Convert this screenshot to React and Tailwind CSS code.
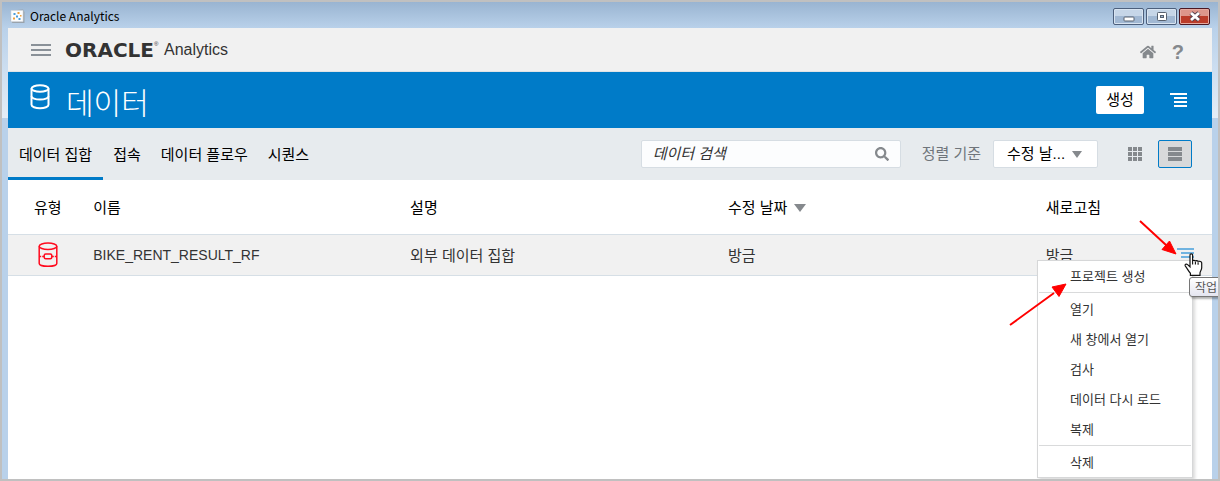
import { FaHome, FaSearch } from 'react-icons/fa';

const tabs = ['데이터 집합', '접속', '데이터 플로우', '시퀀스'];

const rows = [
  { name: 'BIKE_RENT_RESULT_RF', description: '외부 데이터 집합', modified: '방금', refreshed: '방금' },
];

const menuGroups = [
  ['프로젝트 생성'],
  ['열기', '새 창에서 열기', '검사', '데이터 다시 로드', '복제'],
  ['삭제'],
];

function AppIcon() {
  return (
    <svg className="w-[15px] h-[15px]" viewBox="0 0 15 15">
      <path d="M1 1.5 13 0.5 14.5 3v11H2.5L0.5 12z" fill="#9aa3ab" />
      <path d="M1 1.5h12v11H1z" fill="#fdfdfd" stroke="#d5dae0" strokeWidth="0.6" />
      <path d="M7.5 3h2v2h-2zM10 6h1.5v1.5H10zM3 8.5h2v2H3z" fill="#f0a03c" />
      <path d="M3.5 4h2v2h-2zM6 6.5h2v2H6zM8.5 9h2v2h-2z" fill="#4b9bd8" />
    </svg>
  );
}

function DatabaseIcon() {
  return (
    <svg className="w-5 h-[26px]" viewBox="0 0 20 26" fill="none" stroke="#fff" strokeWidth="2">
      <ellipse cx="10" cy="4.5" rx="8.5" ry="3.2" />
      <path d="M1.5 4.5v16.3c0 1.9 3.8 3.4 8.5 3.4s8.5-1.5 8.5-3.4V4.5" />
      <path d="M1.5 12.2c0 1.9 3.8 3.4 8.5 3.4s8.5-1.5 8.5-3.4" />
    </svg>
  );
}

function DatasetIcon() {
  return (
    <svg className="w-5 h-[26px]" viewBox="0 0 20 26" fill="none" stroke="#ff0a1e" strokeWidth="1.5">
      <ellipse cx="10" cy="4.2" rx="8.8" ry="3.2" />
      <path d="M1.2 4.2v17.200c0 1.600 3.800 2.900 8.800 2.900s8.800-1.300 8.800-2.900V4.200" />
      <rect x="6.2" y="12" width="7.6" height="4.800" rx="1.5" />
      <path d="M1.2 14.400h5M13.8 14.400h5" strokeDasharray="2 1" />
    </svg>
  );
}

function ListMenuIcon({ className }) {
  return (
    <svg className={className} viewBox="0 0 17 14" fill="currentColor" shapeRendering="crispEdges">
      <path d="M0 0h17v2H0zM4 4h13v2H4zM4 8h13v2H4zM4 12h13v2H4z" />
    </svg>
  );
}

function WindowButtons() {
  const plain =
    'w-[31px] h-[17px] flex items-center justify-center rounded-[2px] border border-[#4c5f7c] bg-linear-to-b from-[#c6d6e8] from-50% to-[#a1b8d3] to-50% shadow-[inset_0_0_0_1px_#d8e4f1]';
  return (
    <div className="flex gap-[2px]">
      <button type="button" aria-label="최소화" className={plain}>
        <svg className="w-3 h-[11px]" viewBox="0 0 12 11">
          <rect x="1" y="6" width="10" height="4" rx="0.8" fill="#fff" stroke="#56606e" />
        </svg>
      </button>
      <button type="button" aria-label="최대화" className={plain}>
        <svg className="w-3 h-[11px]" viewBox="0 0 12 11">
          <rect x="1.5" y="1.5" width="9" height="8" rx="0.8" fill="#fff" stroke="#56606e" />
          <rect x="4.5" y="4.5" width="3" height="2" fill="#9db5d1" stroke="#56606e" />
        </svg>
      </button>
      <button
        type="button"
        aria-label="닫기"
        className="w-[31px] h-[17px] flex items-center justify-center rounded-[2px] border border-[#4b1722] bg-linear-to-b from-[#dd968b] from-50% to-[#bb3c2a] to-50% shadow-[inset_0_0_0_1px_#e5aaa0]"
      >
        <svg className="w-3 h-[11px]" viewBox="0 0 12 11">
          <path d="M2 2 10 9M10 2 2 9" stroke="#56404c" strokeWidth="4.6" />
          <path d="M2 2 10 9M10 2 2 9" stroke="#fff" strokeWidth="2.8" />
        </svg>
      </button>
    </div>
  );
}

function Menu() {
  return (
    <div
      role="menu"
      className="absolute z-10 top-[25px] right-[19px] w-[156px] bg-white border border-[#d6d7d8] shadow-[2px_2px_3px_rgba(0,0,0,0.15)]"
    >
      {menuGroups.map((group, i) => (
        <div key={group[0]}>
          {i > 0 && <hr className="mx-px my-px border-0 h-px bg-[#d9dadb]" />}
          {group.map((item) => (
            <button
              key={item}
              type="button"
              role="menuitem"
              className="block w-full h-[30px] pl-8 text-left text-[13px] leading-8 text-[#333]"
            >
              {item}
            </button>
          ))}
        </div>
      ))}
    </div>
  );
}

function HandCursor() {
  return (
    <svg className="absolute z-20 top-[18px] right-[9px] w-[19px] h-[23px]" viewBox="0 0 19 23">
      <path
        d="M6 1.8C6 0.6 8.6 0.6 8.6 1.8V8c0-1 2.8-1 2.8.3 0-1 2.7-.8 2.7.5 0-.9 3.6-.7 3.6.9v5.1c0 2.2-1.7 3.5-1.7 5.2v2.3H6.4v-2.1C4.6 18.6 3.6 15.9 1.4 13.1.3 11.4 2.3 10.4 3.6 11.6L6 13.8z"
        fill="#fff"
        stroke="#111"
        strokeWidth="1.2"
      />
      <path d="M8.6 8v3.5M11.4 8.500v3M14.1 9.200v2.500" stroke="#111" strokeWidth="1.1" />
    </svg>
  );
}

function Arrows() {
  return (
    <svg
      className="absolute z-30 top-[216px] right-4 w-[196px] h-[112px] pointer-events-none"
      viewBox="0 0 196 112"
      fill="#f00"
      stroke="#f00"
    >
      <path d="M134 3 160 27M4 107 48 75" strokeWidth="2" />
      <path d="M170 36 156 31.5 163.5 23z" strokeWidth="1" />
      <path d="M60 66 53 78.5 46 69z" strokeWidth="1" />
    </svg>
  );
}

export default function App() {
  return (
    <div className="relative min-h-screen flex flex-col overflow-hidden border-2 border-[#c0c0c0] bg-[#b9d1ea] text-[15px] text-[#333] font-['Liberation_Sans','Noto_Sans_CJK_KR',sans-serif]">
      <div className="flex-1 flex flex-col px-[6px] bg-[linear-gradient(#99b4d1,#b9d1ea_26px,#e3edf7_116px,#b9d1ea_116px)]">
        <div className="h-[26px] flex items-center justify-between px-[2px] pt-[2px]">
          <div className="flex items-center gap-[5px]">
            <AppIcon />
            <span className="text-xs leading-4 text-black font-['Noto_Sans_CJK_KR',sans-serif]">Oracle Analytics</span>
          </div>
          <WindowButtons />
        </div>

        <header className="h-11 flex items-center justify-between pl-[23px] pr-[28px] bg-[#f1f1f1] border-b border-[#dfe3e6]">
          <div className="flex items-center">
            <button type="button" aria-label="탐색기" className="flex flex-col gap-[3px] mr-[14px]">
              <span className="w-5 h-[2px] bg-[#8a9198]" />
              <span className="w-5 h-[2px] bg-[#8a9198]" />
              <span className="w-5 h-[2px] bg-[#8a9198]" />
            </button>
            <div className="w-[99px] flex items-start text-[#333]">
              <span className="text-[20px] leading-6 font-bold font-['DejaVu_Sans',sans-serif]">ORACLE</span>
              <span className="text-[6px] leading-3">®</span>
            </div>
            <span className="text-base leading-6 text-[#333]">Analytics</span>
          </div>
          <div className="flex items-center gap-4 pt-1 text-[#85898d]">
            <a href="#home" aria-label="홈">
              <FaHome className="w-4 h-4" />
            </a>
            <button type="button" aria-label="도움말" className="text-xl leading-6 font-bold">
              ?
            </button>
          </div>
        </header>

        <div className="h-14 flex items-center justify-between pl-[22px] pr-[25px] bg-[#007bc8] text-white">
          <div className="flex items-start gap-4 pt-2">
            <DatabaseIcon />
            <h1 className="text-[30px] leading-10 font-light">데이터</h1>
          </div>
          <div className="flex items-center gap-[26px]">
            <button type="button" className="w-12 h-7 rounded-[2px] bg-white text-black leading-7">
              생성
            </button>
            <button type="button" aria-label="페이지 메뉴">
              <ListMenuIcon className="w-[17px] h-[14px]" />
            </button>
          </div>
        </div>

        <div className="h-[52px] flex items-center justify-between pr-5 bg-[#e7ebee]">
          <nav className="h-full flex">
            {tabs.map((tab, i) => (
              <a
                key={tab}
                href={`#${i}`}
                className={
                  i === 0
                    ? 'px-[11px] border-b-3 border-[#007bc8] leading-[54px] text-black'
                    : 'px-[10px] border-b-3 border-transparent leading-[54px] text-black'
                }
              >
                {tab}
              </a>
            ))}
          </nav>
          <div className="flex items-center">
            <label className="w-[260px] h-7 flex items-center px-[11px] rounded-[2px] border border-[#d6dde3] bg-[#fcfdfe]">
              <input
                type="text"
                aria-label="데이터 검색"
                placeholder="데이터 검색"
                className="flex-1 min-w-0 italic outline-none placeholder:text-[#333]"
              />
              <FaSearch className="w-[14px] h-[14px] text-[#85898d]" />
            </label>
            <label htmlFor="sort" className="ml-[21px] mr-3 text-[#6f757b]">
              정렬 기준
            </label>
            <div className="relative">
              <select
                id="sort"
                className="w-[105px] h-7 pl-[13px] appearance-none rounded-[2px] border border-[#d6dde3] bg-white text-black outline-none"
              >
                <option>수정 날...</option>
              </select>
              <svg className="absolute right-4 top-[11px] w-[10px] h-[7px] pointer-events-none" viewBox="0 0 10 7">
                <path d="M0 0h10L5 7z" fill="#85898d" />
              </svg>
            </div>
            <button type="button" aria-label="그리드 보기" className="ml-[30px]">
              <svg className="w-[14px] h-[14px]" viewBox="0 0 14 14" fill="#85898d">
                <path d="M0 0h4v4H0zM5 0h4v4H5zM10 0h4v4h-4zM0 5h4v4H0zM5 5h4v4H5zM10 5h4v4h-4zM0 10h4v4H0zM5 10h4v4H5zM10 10h4v4h-4z" />
              </svg>
            </button>
            <button
              type="button"
              aria-label="목록 보기"
              className="ml-4 w-[34px] h-7 flex items-center justify-center rounded-[2px] border border-[#007bc8] bg-[#d8d9da]"
            >
              <svg className="w-[14px] h-[14px]" viewBox="0 0 14 14" fill="#85898d">
                <path d="M0 0h14v4H0zM0 5h14v4H0zM0 10h14v4H0z" />
              </svg>
            </button>
          </div>
        </div>

        <main className="flex-1 bg-white">
          <table className="w-full table-fixed border-collapse text-left">
            <thead>
              <tr className="h-[54px] border-b border-[#d6dfe6] text-black">
                <th className="w-[7%] pl-[26px] pt-[2px] font-normal">유형</th>
                <th className="w-[26.4%] pl-px pt-[2px] font-normal">이름</th>
                <th className="w-[26.4%] pt-[2px] font-normal">설명</th>
                <th className="w-[26.4%] pt-[2px] font-normal">
                  <span className="flex items-center gap-[7px]">
                    수정 날짜
                    <svg className="w-3 h-2" viewBox="0 0 12 8">
                      <path d="M0 0h12L6 8z" fill="#85898d" />
                    </svg>
                  </span>
                </th>
                <th className="pt-[2px] font-normal">새로고침</th>
              </tr>
            </thead>
            <tbody>
              {rows.map((row) => (
                <tr key={row.name} className="h-[41px] border-b border-[#d6dfe6] bg-[#f1f1f1]">
                  <td className="pl-[30px]">
                    <DatasetIcon />
                  </td>
                  <td className="pl-px text-sm">{row.name}</td>
                  <td className="pt-1">{row.description}</td>
                  <td className="pt-1">{row.modified}</td>
                  <td>
                    <div className="relative h-10 flex items-center justify-between pr-[18px]">
                      <span className="pt-1">{row.refreshed}</span>
                      <button type="button" aria-label="작업 메뉴" className="text-[#70b3e0]">
                        <ListMenuIcon className="w-[17px] h-[14px]" />
                      </button>
                      <Menu />
                      <HandCursor />
                      <div
                        role="tooltip"
                        className="absolute z-20 top-[42px] -right-5 w-[43px] h-5 pl-[5px] rounded-[3px] border border-[#767676] bg-linear-to-b from-white to-[#e4e5f0] text-xs leading-5 text-[#575757] shadow-[2px_2px_2px_rgba(0,0,0,0.3)]"
                      >
                        작업
                      </div>
                    </div>
                  </td>
                </tr>
              ))}
            </tbody>
          </table>
        </main>
      </div>
      <Arrows />
    </div>
  );
}
